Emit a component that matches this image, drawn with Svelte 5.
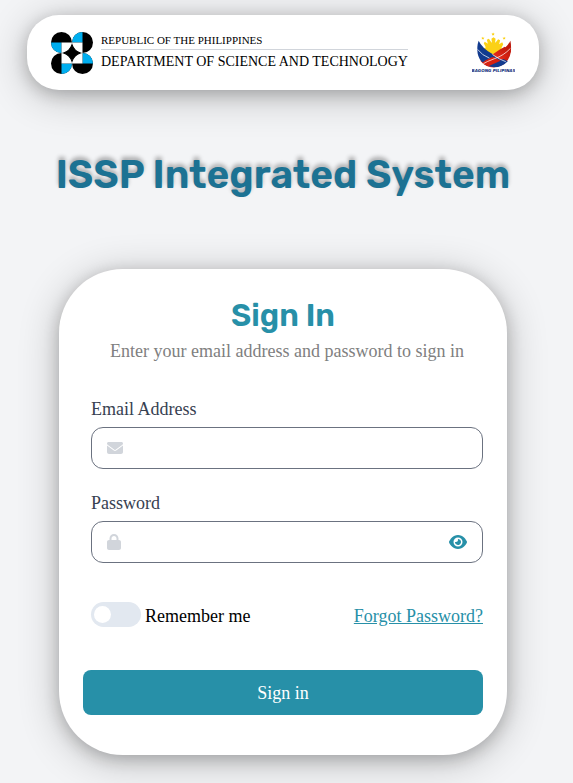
<script>
  let email = $state('');
  let password = $state('');
  let remember = $state(false);
  let visible = $state(false);
</script>

<div class="page">
  <header>
    <svg class="dost" viewBox="0 0 4 4" aria-label="DOST logo" role="img">
      <circle cx="1" cy="1" r="1" />
      <circle cx="3" cy="1" r="1" />
      <circle cx="1" cy="3" r="1" />
      <circle cx="3" cy="3" r="1" />
      <g fill="#00aeef">
        <path d="M1 1H0A1 1 0 0 0 1 2z" />
        <path d="M3 1V0A1 1 0 0 0 2 1z" />
        <path d="M3 3H4A1 1 0 0 0 3 2z" />
        <path d="M1 3V4A1 1 0 0 0 2 3z" />
      </g>
      <path d="M1 1H3V3H1z" fill="#fff" />
      <path d="M2 1.200Q2.200 1.800 2.800 2Q2.200 2.200 2 2.800Q1.800 2.200 1.200 2Q1.800 1.800 2 1.200z" stroke="#000" stroke-width=".1" />
    </svg>
    <div class="agency">
      <span class="republic">REPUBLIC OF THE PHILIPPINES</span>
      <span class="department">DEPARTMENT OF SCIENCE AND TECHNOLOGY</span>
    </div>
    <svg class="bagong" viewBox="0 0 42 42" aria-label="Bagong Pilipinas logo" role="img">
      <defs>
        <linearGradient id="red" x1="0" x2="1" y1="1" y2="0">
          <stop offset="0" stop-color="#f0321e" />
          <stop offset="1" stop-color="#b81408" />
        </linearGradient>
      </defs>
      <g fill="#fbd116">
        <path d="M20.600 1.500l.5 1 1.100.1-.8.700.2 1.100-1-.5-1 .5.200-1.100-.8-.7 1.100-.1z" />
        <path d="M10.600 5.500l.5 1 1.100.1-.8.700.2 1.100-1-.5-1 .5.200-1.100-.8-.7 1.100-.1z" />
        <path d="M31.400 5.500l.5 1 1.100.1-.8.700.2 1.100-1-.5-1 .5.200-1.100-.8-.7 1.100-.1z" />
        <path d="M19.500 12L19 7.500l2-1.500L23 7.500l-.5 4.500 3-4 2 1-1 4 3-2 1 2-2 4 3 1-10.500 8L10.500 17l3-1-2-4 1-1.500 3 2-1-4 2-1z" />
        <circle cx="21" cy="17" r="6" />
      </g>
      <path d="M37.500 9.500Q34 17 23 22.500Q12 27 8 29Q14 36 22 35.500Q36 34 38 20Q38.500 14 37.500 9.500z" fill="url(#red)" />
      <path d="M6.500 9.500Q10 17 20 22.500Q30 27 35 29.500Q29 35.500 22 35.500Q8 34 5.500 22Q4.500 15 6.500 9.500z" fill="#123b8f" />
      <path d="M20 23Q27 18 32 15.500L38 20Q35 26 29 28Q24 26.500 20 23z" fill="url(#red)" />
      <path d="M10 31Q17 26 21 25.500L28 29Q21 32 16 34.500Q12.500 33 10 31z" fill="#d8200f" />
      <g fill="none" stroke="#fff" stroke-width=".7">
        <path d="M5.500 18Q10 24 17 26.500" />
        <path d="M37.500 17Q31 24 22 27Q14 30 11 32" />
        <path d="M20 23Q27 28 33 30" />
      </g>
      <text x="21" y="40.500" text-anchor="middle">BAGONG PILIPINAS</text>
    </svg>
  </header>

  <h1>ISSP Integrated System</h1>

  <main>
    <h2>Sign In</h2>
    <p>Enter your email address and password to sign in</p>

    <form onsubmit={(e) => e.preventDefault()}>
      <div class="field">
        <label for="email">Email Address</label>
        <div class="box">
          <svg width="16" height="16" viewBox="0 0 512 512" aria-hidden="true"><path d="M48 64C21.500 64 0 85.500 0 112c0 15.100 7.100 29.300 19.200 38.400L236.800 313.600c11.400 8.500 27 8.500 38.400 0L492.800 150.400c12.100-9.100 19.200-23.300 19.200-38.400c0-26.500-21.500-48-48-48H48zM0 176V384c0 35.300 28.700 64 64 64H448c35.300 0 64-28.700 64-64V176L294.400 339.200c-22.800 17.100-54 17.100-76.800 0L0 176z" /></svg>
          <input id="email" type="email" bind:value={email} />
        </div>
      </div>

      <div class="field">
        <label for="password">Password</label>
        <div class="box">
          <svg width="14" height="16" viewBox="0 0 448 512" aria-hidden="true"><path d="M144 144v48H304V144c0-44.200-35.800-80-80-80s-80 35.800-80 80zM80 192V144C80 64.500 144.500 0 224 0s144 64.500 144 144v48h16c35.300 0 64 28.700 64 64V448c0 35.300-28.700 64-64 64H64c-35.300 0-64-28.700-64-64V256c0-35.300 28.700-64 64-64H80z" /></svg>
          <input id="password" type={visible ? 'text' : 'password'} value={password} oninput={(e) => (password = e.currentTarget.value)} />
          <button class="eye" type="button" aria-label="Show password" onclick={() => (visible = !visible)}>
            <svg width="18" height="16" viewBox="0 0 576 512" aria-hidden="true"><path d="M288 32c-80.800 0-145.500 36.800-192.600 80.600C48.600 156 17.300 208 2.500 243.700c-3.300 7.900-3.300 16.700 0 24.600C17.300 304 48.600 356 95.400 399.400C142.500 443.200 207.200 480 288 480s145.500-36.800 192.600-80.600c46.800-43.500 78.100-95.400 93-131.100c3.300-7.900 3.300-16.700 0-24.600c-14.900-35.700-46.200-87.700-93-131.100C433.500 68.800 368.800 32 288 32zM144 256a144 144 0 1 1 288 0 144 144 0 1 1 -288 0zm144-64c0 35.300-28.700 64-64 64c-7.100 0-13.900-1.200-20.300-3.300c-5.500-1.800-11.900 1.600-11.700 7.400c.3 6.900 1.300 13.800 3.200 20.700c13.700 51.200 66.400 81.600 117.600 67.900s81.600-66.400 67.900-117.600c-11.100-41.500-47.800-69.400-88.600-71.100c-5.800-.2-9.200 6.100-7.400 11.700c2.100 6.400 3.300 13.200 3.300 20.300z" /></svg>
          </button>
        </div>
      </div>

      <div class="options">
        <label class="remember">
          <input type="checkbox" bind:checked={remember} />
          <span>Remember me</span>
        </label>
        <a href="#forgot">Forgot Password?</a>
      </div>

      <button class="submit" type="submit">Sign in</button>
    </form>
  </main>
</div>

<style>
  :global(body) {
    background: #f3f4f6;
  }

  .page {
    box-sizing: border-box;
    min-height: 100vh;
    padding: 15px 15px 28px 8px;
    display: flex;
    flex-direction: column;
    align-items: center;
    font: 18px/28px "Liberation Serif", "Times New Roman", serif;
    color: #000;
  }

  header,
  main {
    box-sizing: border-box;
    width: 100%;
    background: #fff;
    box-shadow: 0 4px 16px rgba(0, 0, 0, 0.2), 0 6px 40px rgba(0, 0, 0, 0.24);
  }

  header {
    max-width: 512px;
    padding: 16px 24px;
    border-radius: 32px;
    display: flex;
    align-items: center;
    gap: 8px;
  }

  .dost {
    width: 42px;
    height: 42px;
    flex: none;
  }

  .bagong {
    width: 43px;
    height: 43px;
    flex: none;
    margin-left: auto;
  }

  .bagong text {
    font: italic 900 4px "DejaVu Sans", sans-serif;
    fill: #0c2a78;
  }

  .agency {
    display: flex;
    flex-direction: column;
    white-space: nowrap;
  }

  .republic {
    font-size: 11px;
    line-height: 18px;
    border-bottom: 1px solid #d1d5db;
  }

  .department {
    font-size: 14px;
    line-height: 24px;
  }

  h1,
  h2 {
    margin: 0;
    font-family: Rubik, Roboto, sans-serif;
    font-weight: 600;
    text-align: center;
  }

  h1 {
    margin: 61px 0 70px;
    font-size: 39px;
    line-height: 48px;
    color: #1c7293;
    text-shadow: 0 -3px 4px rgba(0, 0, 0, 0.3);
  }

  main {
    max-width: 448px;
    padding: 27px 24px 40px;
    border-radius: 64px;
  }

  h2 {
    margin-bottom: 1px;
    font-size: 31px;
    line-height: 40px;
    color: #2790a8;
  }

  p {
    margin: 0 0 30px 8px;
    text-align: center;
    color: #808080;
  }

  form {
    display: flex;
    flex-direction: column;
  }

  .field {
    margin: 0 0 20px 8px;
    display: flex;
    flex-direction: column;
    gap: 4px;
    color: #374151;
  }

  .box {
    box-sizing: border-box;
    height: 42px;
    padding: 0 15px;
    display: flex;
    align-items: center;
    gap: 12px;
    border: 1px solid #6b7280;
    border-radius: 12px;
    fill: #d1d5db;
  }

  .box svg {
    display: block;
    flex: none;
  }

  .box input {
    flex: 1;
    min-width: 0;
    padding: 0;
    border: 0;
    outline: 0;
    background: none;
    font: inherit;
  }

  .eye {
    padding: 0;
    border: 0;
    background: none;
    fill: #2790a8;
    cursor: pointer;
  }

  .options {
    margin: 19px 0 40px 8px;
    display: flex;
    justify-content: space-between;
    align-items: center;
  }

  .remember {
    display: flex;
    align-items: flex-start;
    gap: 4px;
  }

  .remember input {
    appearance: none;
    box-sizing: border-box;
    width: 50px;
    height: 25px;
    margin: 0;
    padding: 4px 3px;
    border-radius: 13px;
    background: #e2e8f0;
    display: flex;
    cursor: pointer;
  }

  .remember input::before {
    content: "";
    width: 17px;
    height: 17px;
    border-radius: 50%;
    background: #fff;
  }

  .remember input:checked {
    background: #2790a8;
    justify-content: flex-end;
  }

  a {
    color: #2790a8;
    text-decoration: underline;
  }

  .submit {
    height: 45px;
    border: 0;
    border-radius: 8px;
    background: #2790a8;
    color: #fff;
    font: inherit;
    cursor: pointer;
  }
</style>
